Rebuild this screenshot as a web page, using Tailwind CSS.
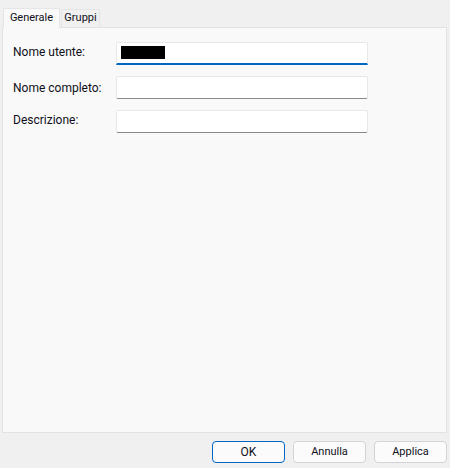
<!DOCTYPE html>
<html lang="it">
    <head>
        <meta charset="UTF-8" />
        <title>Proprieta utente</title>
        <script src="https://cdn.jsdelivr.net/npm/@tailwindcss/browser@4"></script>
    </head>
    <body class="h-[468px] w-[450px] overflow-hidden bg-[#f0f0f0] font-['Roboto',sans-serif] text-[12px] text-[#10101a]">
        <div class="flex h-[27px] items-end pl-[3px]">
            <div class="relative z-10 -mb-px flex h-[20px] w-[57px] items-center justify-center rounded-t-[2px] border border-b-0 border-[#e5e5e5] bg-[#f9f9f9] pb-[1px] text-[11px]">Generale</div>
            <div class="ml-px flex h-[18px] w-[39px] items-center justify-center border border-b-0 border-[#e5e5e5] bg-[#f0f0f0] text-[11px]">Gruppi</div>
        </div>

        <div class="ml-[2px] flex h-[406px] w-[445px] flex-col gap-[11px] border border-[#e2e2e2] bg-[#f9f9f9] pl-[10px] pt-[14px]">
            <div class="flex items-center">
                <label class="w-[103px] pb-[4px]">Nome utente:</label>
                <div class="flex h-[23px] w-[252px] items-center rounded-t-[2px] border border-b-2 border-[#e8e8e8] border-b-[#0067c0] bg-white pl-1">
                    <div class="mb-[2px] h-[13px] w-[44px] bg-black"></div>
                </div>
            </div>
            <div class="flex items-center">
                <label class="w-[103px]">Nome completo:</label>
                <div class="h-[23px] w-[252px] rounded-[2px] border border-[#e8e8e8] border-b-[#8a8a8a] bg-white"></div>
            </div>
            <div class="flex items-center">
                <label class="w-[103px] pb-[3px]">Descrizione:</label>
                <div class="h-[23px] w-[252px] rounded-[2px] border border-[#e8e8e8] border-b-[#8a8a8a] bg-white"></div>
            </div>
        </div>

        <div class="mt-[8px] flex justify-end gap-[8px] pr-[3px] text-[11px]">
            <button class="h-[22px] w-[73px] rounded-[4px] border-[1.5px] border-[#0067c0] bg-[#fbfbfb] text-[12px]">OK</button>
            <button class="h-[22px] w-[73px] rounded-[4px] border border-[#d4d4d4] bg-[#fbfbfb]">Annulla</button>
            <button class="h-[22px] w-[73px] rounded-[4px] border border-[#d4d4d4] bg-[#fbfbfb]">Applica</button>
        </div>
    </body>
</html>
